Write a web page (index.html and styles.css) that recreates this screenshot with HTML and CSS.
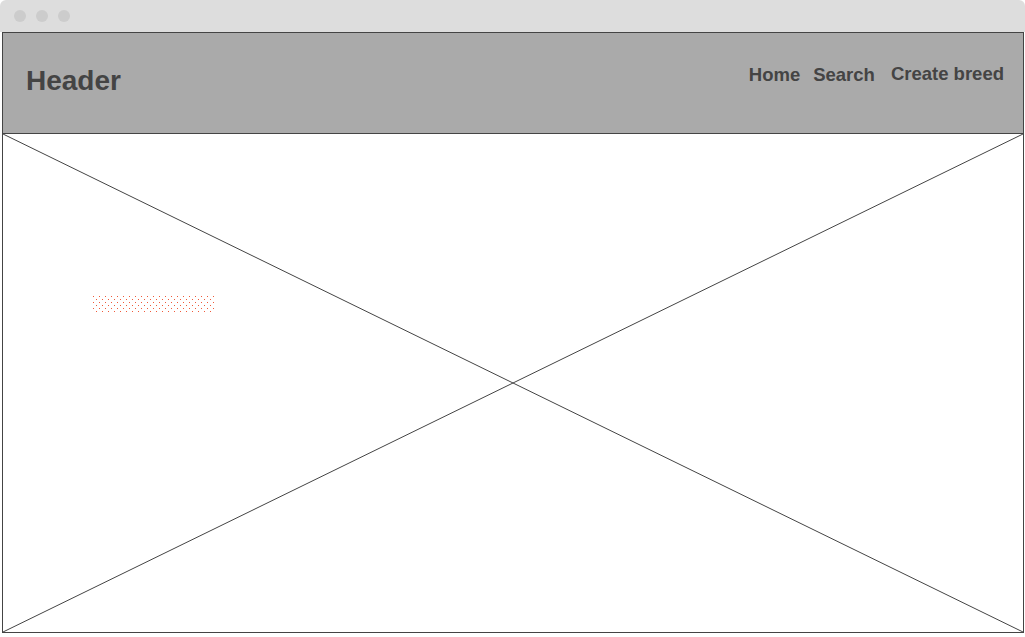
FILE: index.html
```html
<!DOCTYPE html>
<html lang="en">
<head>
    <meta charset="UTF-8">
    <meta name="viewport" content="width=device-width, initial-scale=1.0">
    <title>Header</title>
    <link rel="stylesheet" href="styles.css">
</head>
<body>
    <div class="window">
        <div class="titlebar">
            <span class="light"></span>
            <span class="light"></span>
            <span class="light"></span>
        </div>

        <div class="page">
            <header class="header">
                <h1>Header</h1>
                <nav class="nav">
                    <a href="#">Home</a>
                    <a href="#">Search</a>
                    <a href="#" class="create">Create breed</a>
                </nav>
            </header>

            <main class="placeholder">
                <!-- image placeholder cross -->
                <svg class="cross" viewBox="0 0 100 100" preserveAspectRatio="none">
                    <line x1="0" y1="0" x2="100" y2="100" vector-effect="non-scaling-stroke"/>
                    <line x1="100" y1="0" x2="0" y2="100" vector-effect="non-scaling-stroke"/>
                </svg>
                <svg class="dots" width="121" height="16">
                    <defs>
                        <pattern id="dot" width="6" height="6" patternUnits="userSpaceOnUse">
                            <rect x="0" y="0" width="1" height="1"/>
                            <rect x="3" y="3" width="1" height="1"/>
                        </pattern>
                    </defs>
                    <rect width="121" height="16" fill="url(#dot)"/>
                </svg>
            </main>
        </div>
    </div>
</body>
</html>
```

FILE: styles.css
```css
html, body {
    margin: 0;
    padding: 0;
    background-color: white;
}
body {
    font-family: "Liberation Sans", Arial, sans-serif;
    width: 1025px;
    height: 637px;
    overflow: hidden;
}
.titlebar {
    height: 32px;
    background-color: #dddddd;
    border-radius: 6px 6px 0 0;
    display: flex;
    align-items: center;
    gap: 10px;
    padding-left: 14px;
}
.light {
    width: 12px;
    height: 12px;
    border-radius: 50%;
    background-color: #cccccc;
}
.page {
    margin: 0 1px 0 2px;
}
.header {
    height: 100px;
    background-color: #aaaaaa;
    border: 1px solid #444;
    display: flex;
    justify-content: space-between;
    align-items: center;
    padding: 0 19px 0 23px;
}
.header h1 {
    margin: 0 0 4px 0;
    font-size: 28px;
    font-weight: bold;
    color: #444;
}
.nav {
    display: flex;
    align-items: center;
    margin-bottom: 16px;
}
.nav a {
    color: #444;
    font-size: 18.5px;
    font-weight: bold;
    text-decoration: none;
    margin-left: 13px;
}
.nav a.create {
    margin-left: 16px;
    margin-bottom: 2px;
}
.placeholder {
    position: relative;
    height: 499px;
    border: 1px solid #444;
    border-top: none;
    padding: 162px 0 0 90px;
    box-sizing: border-box;
}
.cross {
    position: absolute;
    top: 0;
    left: 0;
    width: 100%;
    height: 100%;
}
.cross line {
    stroke: #444;
    stroke-width: 1;
}
.dots {
    display: block;
    position: relative;
    fill: #f05a3a;
}
```
